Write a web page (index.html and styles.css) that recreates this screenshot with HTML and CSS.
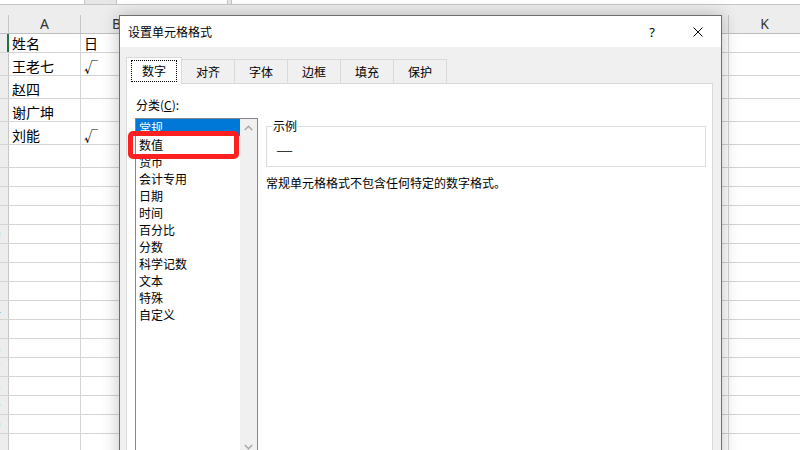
FILE: index.html
```html
<!DOCTYPE html>
<html lang="zh-CN">
<head>
  <meta charset="UTF-8">
  <meta name="viewport" content="width=device-width, initial-scale=1.0">
  <title>设置单元格格式</title>
  <link rel="stylesheet" href="styles.css">
</head>
<body>
  <div class="excel">
    <div class="formula-row">
      <div class="box box-name"></div>
      <div class="box box-func"></div>
      <div class="box box-input"></div>
    </div>
    <div class="strip"></div>

    <div class="row head">
      <div class="rh"></div>
      <div class="ch">A</div><div class="ch">B</div><div class="ch"></div><div class="ch"></div>
      <div class="ch"></div><div class="ch"></div><div class="ch"></div><div class="ch"></div>
      <div class="ch"></div><div class="ch"></div><div class="ch">K</div>
    </div>

    <div class="grid">
      <div class="row"><div class="rh on"><span>1</span></div><div class="c">姓名</div><div class="c">日</div></div>
      <div class="row tall"><div class="rh"><span>2</span></div><div class="c">王老七</div><div class="c">√</div></div>
      <div class="row tall"><div class="rh"><span>3</span></div><div class="c">赵四</div></div>
      <div class="row tall"><div class="rh"><span>4</span></div><div class="c">谢广坤</div></div>
      <div class="row tall"><div class="rh"><span>5</span></div><div class="c">刘能</div><div class="c">√</div></div>
      <div class="row tall"><div class="rh"><span>6</span></div></div>
      <div class="row"><div class="rh"><span>7</span></div></div>
      <div class="row"><div class="rh"><span>8</span></div></div>
      <div class="row"><div class="rh"><span>9</span></div></div>
      <div class="row"><div class="rh"><span>10</span></div></div>
      <div class="row"><div class="rh"><span>11</span></div></div>
      <div class="row"><div class="rh"><span>12</span></div></div>
      <div class="row"><div class="rh"><span>13</span></div></div>
      <div class="row"><div class="rh"><span>14</span></div></div>
      <div class="row"><div class="rh"><span>15</span></div></div>
      <div class="row"><div class="rh"><span>16</span></div></div>
      <div class="row"><div class="rh"><span>17</span></div></div>
      <div class="row"><div class="rh"><span>18</span></div></div>
      <div class="row"><div class="rh"><span>19</span></div></div>
      <div class="row"><div class="rh"><span>20</span></div></div>
      <div class="row"><div class="rh"><span>21</span></div></div>
    </div>

    <div class="dialog">
      <div class="titlebar">
        <div class="title">设置单元格格式</div>
        <div class="tb-btn help">?</div>
        <div class="tb-btn close">
          <svg width="10" height="10" viewBox="0 0 10 10"><path d="M0.5 0.5 L9.5 9.5 M9.5 0.5 L0.5 9.5" stroke="#000" stroke-width="1" fill="none"/></svg>
        </div>
      </div>
      <div class="dlg-body">
        <div class="tabs">
          <div class="tab active"><span class="focus">数字</span></div>
          <div class="tab">对齐</div>
          <div class="tab">字体</div>
          <div class="tab">边框</div>
          <div class="tab">填充</div>
          <div class="tab">保护</div>
        </div>
        <div class="panel">
          <div class="left">
            <div class="label">分类(<u>C</u>):</div>
            <div class="list">
              <div class="items">
                <div class="item sel">常规</div>
                <div class="item">数值</div>
                <div class="item">货币</div>
                <div class="item">会计专用</div>
                <div class="item">日期</div>
                <div class="item">时间</div>
                <div class="item">百分比</div>
                <div class="item">分数</div>
                <div class="item">科学记数</div>
                <div class="item">文本</div>
                <div class="item">特殊</div>
                <div class="item">自定义</div>
              </div>
              <div class="scrollbar">
                <svg width="9" height="6" viewBox="0 0 9 6"><path d="M0.8 5 L4.5 1.3 L8.2 5" stroke="#a6a6a6" stroke-width="1.4" fill="none"/></svg>
                <svg width="9" height="6" viewBox="0 0 9 6"><path d="M0.8 1 L4.5 4.7 L8.2 1" stroke="#a6a6a6" stroke-width="1.4" fill="none"/></svg>
              </div>
            </div>
          </div>
          <div class="right">
            <fieldset class="sample">
              <legend>示例</legend>
              <div class="sample-value"><span class="dash">—</span></div>
            </fieldset>
            <div class="desc">常规单元格格式不包含任何特定的数字格式。</div>
          </div>
        </div>
      </div>
    </div>

    <div class="mark"></div>
  </div>
</body>
</html>
```

FILE: styles.css
```css
body {
  margin: 0;
  width: 800px;
  height: 450px;
  overflow: hidden;
  background: #fff;
  font-family: "Noto Sans CJK SC", sans-serif;
  color: #000;
}
.excel {
  position: relative;
  height: 450px;
  overflow: hidden;
}

/* formula bar edge and ribbon strip */
.formula-row {
  display: flex;
  height: 4px;
  background: #e6e6e6;
  border-bottom: 1px solid #c6c6c6;
}
.box {
  background: #fff;
  border-left: 1px solid #c6c6c6;
  border-right: 1px solid #c6c6c6;
}
.box-name {
  width: 84px;
  border-left: none;
}
.box-func {
  width: 110px;
  margin-left: 31px;
}
.box-input {
  flex: 1;
  margin-left: 3px;
  border-right: none;
}
.strip {
  height: 10px;
  background: #ededed;
}

/* sheet */
.row {
  display: flex;
  height: 19px;
  box-sizing: border-box;
  border-bottom: 1px solid #d4d4d4;
}
.row.tall {
  height: 23px;
}
.row.head {
  background: #ededed;
  border-bottom-color: #bfbfbf;
}
.rh {
  flex: none;
  width: 9px;
  box-sizing: border-box;
  border-right: 1px solid #c6c6c6;
  background: #ededed;
  overflow: hidden;
  font: 13px "Noto Sans", sans-serif;
  color: #444;
}
.rh span {
  display: block;
  width: 30px;
  margin-left: -22px;
  text-align: center;
  line-height: 18px;
}
.rh.on {
  border-right: 2px solid #217346;
}
.ch {
  flex: none;
  width: 72px;
  box-sizing: border-box;
  border-right: 1px solid #c6c6c6;
  text-align: center;
  font: 14px "Noto Sans", sans-serif;
  line-height: 18px;
  color: #333;
}
.grid {
  background: repeating-linear-gradient(90deg, transparent 0 71px, #d4d4d4 71px 72px);
  background-position: 9px 0;
}
.c {
  flex: none;
  width: 72px;
  box-sizing: border-box;
  padding-left: 3px;
  font-size: 14px;
  line-height: 18px;
  align-self: flex-end;
}

/* dialog */
.dialog {
  position: absolute;
  left: 119px;
  top: 15px;
  width: 603px;
  height: 470px;
  box-sizing: border-box;
  background: #f0f0f0;
  border: 1px solid #6e6e6e;
  box-shadow: 0 0 16px rgba(0,0,0,0.25);
  font-size: 12px;
}
.titlebar {
  display: flex;
  align-items: center;
  height: 31px;
  background: #fff;
  padding-left: 8px;
}
.title {
  flex: 1;
}
.tb-btn {
  width: 46px;
  height: 31px;
  display: flex;
  align-items: center;
  justify-content: center;
}
.tb-btn.help {
  font: 13px "Noto Sans", sans-serif;
}
.dlg-body {
  padding: 10px 8px 0 6px;
}
.tabs {
  display: flex;
  align-items: flex-end;
  height: 26px;
  position: relative;
  z-index: 1;
}
.tab {
  height: 24px;
  box-sizing: border-box;
  padding: 0 14px;
  border: 1px solid #d9d9d9;
  border-bottom: none;
  border-left: none;
  line-height: 23px;
}
.tab.active {
  height: 27px;
  margin-bottom: -1px;
  padding: 0 4px;
  border-left: 1px solid #d9d9d9;
  background: #fff;
  display: flex;
  align-items: center;
}
.focus {
  display: inline-block;
  border: 1px dotted #000;
  padding: 2px 10px;
  line-height: 16px;
}
.panel {
  display: flex;
  gap: 8px;
  height: 400px;
  box-sizing: border-box;
  background: #fff;
  border: 1px solid #d9d9d9;
  padding: 13px 6px 0 9px;
}
.left {
  width: 122px;
  flex: none;
}
.label {
  line-height: 16px;
  margin-bottom: 5px;
}
.list {
  display: flex;
  width: 123px;
  height: 339px;
  margin-left: -1px;
  box-sizing: border-box;
  border: 1px solid #828790;
  background: #fff;
}
.items {
  flex: 1;
}
.item {
  height: 17px;
  line-height: 17px;
  padding-left: 3px;
}
.item.sel {
  background: #0078d7;
  color: #fff;
}
.scrollbar {
  width: 17px;
  background: #f0f0f0;
  display: flex;
  flex-direction: column;
  justify-content: space-between;
  align-items: center;
  padding: 6px 0 6px;
  box-sizing: border-box;
}
.right {
  flex: 1;
}
.sample {
  margin: 21px 0 0;
  padding: 8px 0 8px 9px;
  border: 1px solid #dcdcdc;
}
.sample legend {
  margin-left: -4px;
  padding: 0 1px;
  line-height: 16px;
}
.sample-value {
  line-height: 16px;
}
.dash {
  display: inline-block;
  transform: scaleX(1.6);
  transform-origin: left center;
}
.desc {
  margin-top: 8px;
  line-height: 16px;
}

/* red annotation box */
.mark {
  position: absolute;
  left: 128px;
  top: 131px;
  width: 111px;
  height: 28px;
  box-sizing: border-box;
  border: 5px solid #fe2020;
  border-radius: 5px;
}
```
